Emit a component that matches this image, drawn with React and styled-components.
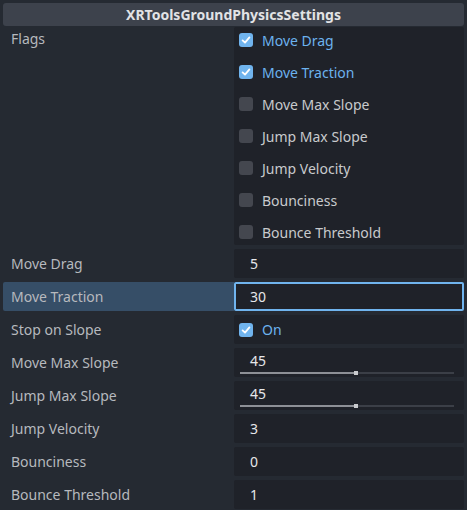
import React from 'react';
import styled, { createGlobalStyle } from 'styled-components';

const GlobalStyle = createGlobalStyle`
    html, body {
        margin: 0;
        padding: 0;
        background: #252a32;
    }
    * {
        box-sizing: border-box;
    }
`;

const Panel = styled.div`
    width: 467px;
    height: 510px;
    overflow: hidden;
    padding: 3px 3px 0 3px;
    background: #252a32;
    font-family: "Noto Sans", "DejaVu Sans", sans-serif;
    font-size: 14px;
`;

const Header = styled.div`
    height: 23px;
    background: #3d424c;
    border-radius: 3px;
    color: #e2e3e5;
    font-weight: bold;
    text-align: center;
    line-height: 23px;
    margin-bottom: 1px;
`;

const Grid = styled.div`
    display: grid;
    grid-template-columns: 231px 230px;
    row-gap: 4px;
`;

const Label = styled.div`
    height: ${p => (p.tall ? 'auto' : '29px')};
    padding: ${p => (p.tall ? '2px 0 0 8px' : '0 0 0 8px')};
    line-height: ${p => (p.tall ? '20px' : '29px')};
    color: #b6b9be;
    background: ${p => (p.selected ? '#364e67' : 'transparent')};
    border-radius: 2px 0 0 2px;
`;

const Field = styled.div`
    height: 29px;
    background: #1f2229;
    border-radius: 2px;
    border: 2px solid ${p => (p.focused ? '#70b4ee' : 'transparent')};
    color: #e6e7e9;
    padding-left: 14px;
    line-height: 25px;
`;

const FlagList = styled.div`
    display: flex;
    flex-direction: column;
    gap: 6px;
    background: #1f2229;
    border-radius: 2px;
`;

const CheckRow = styled.div`
    display: flex;
    align-items: center;
    height: 26px;
    padding-left: 5px;
    gap: 9px;
    color: ${p => (p.checked ? '#6cb2ee' : '#c8cacd')};
`;

const CheckField = styled(CheckRow)`
    height: 29px;
    background: #1f2229;
    border-radius: 2px;
`;

const Box = styled.span`
    width: 14px;
    height: 14px;
    border-radius: 3px;
    flex: none;
    display: flex;
    align-items: center;
    justify-content: center;
    background: ${p => (p.checked ? '#70b4ee' : '#44474f')};
`;

const SliderField = styled.div`
    height: 29px;
    background: #1f2229;
    border-radius: 2px;
    padding-top: 3px;
    color: #e6e7e9;
`;

const SliderValue = styled.div`
    line-height: 20px;
    padding-left: 16px;
`;

const Track = styled.div`
    position: relative;
    height: 2px;
    margin: 1px 10px 0 6px;
    background: #3b3f47;
`;

const TrackFill = styled.div`
    height: 100%;
    background: #8d9096;
`;

const Thumb = styled.span`
    position: absolute;
    top: -1px;
    width: 4px;
    height: 4px;
    margin-left: -2px;
    background: #c9cbce;
`;

const Check = ({ checked }) => (
    <Box checked={checked}>
        {checked && (
            <svg width="10" height="10" viewBox="0 0 10 10">
                <path d="M1.6 5.4 L4 7.6 L8.4 2.4" fill="none" stroke="#fff" strokeWidth="1.8" strokeLinecap="round" strokeLinejoin="round" />
            </svg>
        )}
    </Box>
);

const flags = [
    { name: 'Move Drag', on: true },
    { name: 'Move Traction', on: true },
    { name: 'Move Max Slope', on: false },
    { name: 'Jump Max Slope', on: false },
    { name: 'Jump Velocity', on: false },
    { name: 'Bounciness', on: false },
    { name: 'Bounce Threshold', on: false },
];

const Slider = ({ value, ratio }) => (
    <SliderField>
        <SliderValue>{value}</SliderValue>
        <Track>
            <TrackFill style={{ width: `${ratio * 100}%` }} />
            <Thumb style={{ left: `${ratio * 100}%` }} />
        </Track>
    </SliderField>
);

const App = () => {
    return (
        <Panel>
            <GlobalStyle />
            <Header>XRToolsGroundPhysicsSettings</Header>
            <Grid>
                <Label tall>Flags</Label>
                <FlagList>
                    {flags.map(f => (
                        <CheckRow key={f.name} checked={f.on}>
                            <Check checked={f.on} />
                            {f.name}
                        </CheckRow>
                    ))}
                </FlagList>

                <Label>Move Drag</Label>
                <Field>5</Field>

                <Label selected>Move Traction</Label>
                <Field focused>30</Field>

                <Label>Stop on Slope</Label>
                <CheckField checked>
                    <Check checked />
                    On
                </CheckField>

                <Label>Move Max Slope</Label>
                <Slider value="45" ratio={0.54} />

                <Label>Jump Max Slope</Label>
                <Slider value="45" ratio={0.54} />

                <Label>Jump Velocity</Label>
                <Field>3</Field>

                <Label>Bounciness</Label>
                <Field>0</Field>

                <Label>Bounce Threshold</Label>
                <Field>1</Field>
            </Grid>
        </Panel>
    );
};

export default App;
